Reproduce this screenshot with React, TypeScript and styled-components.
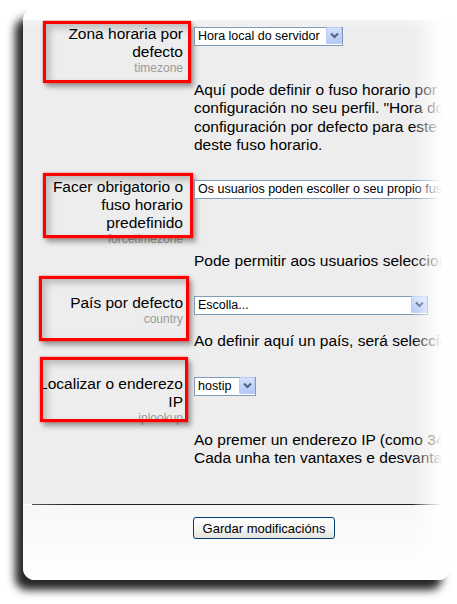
import React from 'react';
import styled, { createGlobalStyle } from 'styled-components';

const GlobalStyle = createGlobalStyle`
  html, body {
    margin: 0;
    padding: 0;
    background: #ffffff;
    font-family: "Liberation Sans", Arial, sans-serif;
  }
`;

const Page = styled.div`
  width: 457px;
  height: 604px;
  padding: 8px 7px 0 23px;
  box-sizing: border-box;
  overflow: hidden;
`;

const Card = styled.div`
  position: relative;
  width: 427px;
  height: 572px;
  background: #ffffff;
  border-radius: 12px;
  box-shadow: -8px 10px 9px rgba(0, 0, 0, 0.85);
  overflow: hidden;
  display: flex;
  flex-direction: column;
`;

const Panel = styled.div`
  margin-top: 12px;
  padding: 5px 0 37px 10px;
  background: linear-gradient(to bottom, #f4f4f4 0, #ededed 10px);
  overflow: hidden;
`;

const Row = styled.div`
  display: grid;
  grid-template-columns: 150px 600px;
  column-gap: 11px;
  margin-bottom: 24px;

  &:last-child {
    margin-bottom: 0;
  }
`;

const LabelCell = styled.div`
  position: relative;
  grid-column: 1;
  grid-row: 1;
  text-align: right;
  color: #000;
`;

const LabelText = styled.div`
  font-size: 15.5px;
  line-height: 18px;
`;

const Alias = styled.div`
  font-size: 12px;
  line-height: 14px;
  color: #9a9a9a;
`;

const Highlight = styled.div<{ $top: number; $left: number; $w: number; $h: number }>`
  position: absolute;
  top: ${p => p.$top}px;
  left: ${p => p.$left}px;
  width: ${p => p.$w}px;
  height: ${p => p.$h}px;
  box-sizing: border-box;
  border: 3px solid #ff0000;
  box-shadow: 0 0 2px rgba(255, 0, 0, 0.6), 3px 4px 5px rgba(0, 0, 0, 0.35),
    inset 4px 4px 7px rgba(0, 0, 0, 0.22);
  pointer-events: none;
`;

const Control = styled.div`
  grid-column: 2;
  grid-row: 1;
  padding-top: 1px;
`;

const SelectWrap = styled.div<{ $w: number }>`
  position: relative;
  width: ${p => p.$w}px;
  height: 19px;
`;

const Select = styled.select`
  appearance: none;
  -webkit-appearance: none;
  width: 100%;
  height: 19px;
  box-sizing: border-box;
  margin: 0;
  padding: 0 18px 0 3px;
  border: 1px solid #7f9db9;
  border-radius: 0;
  background: #ffffff;
  font-family: "Liberation Sans", Arial, sans-serif;
  font-size: 12.5px;
  line-height: 17px;
  color: #000;
`;

const Arrow = styled.span`
  position: absolute;
  top: 1px;
  right: 1px;
  width: 16px;
  height: 17px;
  box-sizing: border-box;
  border: 1px solid #bccdf5;
  border-radius: 1px;
  background: linear-gradient(to bottom, #d4e0fc, #b4c8f5);
  display: flex;
  align-items: center;
  justify-content: center;
  pointer-events: none;
`;

const Description = styled.div`
  grid-column: 2;
  grid-row: 2;
  margin-top: 6px;
  font-size: 15.5px;
  line-height: 18.3px;
  white-space: nowrap;
  color: #000;
`;

const Fade = styled.div`
  position: absolute;
  top: 0;
  right: 0;
  width: 38px;
  height: 100%;
  background: linear-gradient(to right, rgba(255, 255, 255, 0), #ffffff 80%);
  pointer-events: none;
`;

const Separator = styled.div`
  height: 1px;
  margin: 0 5px 0 9px;
  background: linear-gradient(to right, #555 0, #222 10%, #222 92%, #888 100%);
`;

const Footer = styled.div`
  flex: 1;
  padding: 12px 0 0 170px;
  background: linear-gradient(to bottom, #f7f7f7, #ffffff);
`;

const Button = styled.button`
  height: 22px;
  width: 142px;
  padding: 0;
  border: 1px solid #003c74;
  border-radius: 3px;
  background: linear-gradient(to bottom, #ffffff 0, #f3f3ef 60%, #e3e2da 100%);
  font-family: "Liberation Sans", Arial, sans-serif;
  font-size: 13px;
  color: #000;
`;

const Chevron = () => (
  <svg width="9" height="7" viewBox="0 0 9 7">
    <polyline points="1,1.5 4.5,5 8,1.5" fill="none" stroke="#4d6185" strokeWidth="2" />
  </svg>
);

type Setting = {
  label: string;
  alias: string;
  value: string;
  width: number;
  lines: string[];
  box: { top: number; left: number; w: number; h: number };
};

const settings: Setting[] = [
  {
    label: 'Zona horaria por defecto',
    alias: 'timezone',
    value: 'Hora local do servidor',
    width: 149,
    lines: [
      'Aquí pode definir o fuso horario por defecto dos usuarios. Eles poden cambiar esta',
      'configuración no seu perfil. "Hora do servidor" fará que Moodle use a',
      'configuración por defecto para este servidor. Os usuarios poden escoller a partir',
      'deste fuso horario.',
    ],
    box: { top: -4, left: 10, w: 148, h: 62 },
  },
  {
    label: 'Facer obrigatorio o fuso horario predefinido',
    alias: 'forcetimezone',
    value: 'Os usuarios poden escoller o seu propio fuso horario',
    width: 340,
    lines: ['Pode permitir aos usuarios seleccionar o seu propio fuso horario ou forzalos'],
    box: { top: -5, left: 10, w: 150, h: 65 },
  },
  {
    label: 'País por defecto',
    alias: 'country',
    value: 'Escolla...',
    width: 234,
    lines: ['Ao definir aquí un país, será seleccionado por defecto nas novas contas'],
    box: { top: -18, left: 6, w: 150, h: 65 },
  },
  {
    label: 'Localizar o enderezo IP',
    alias: 'iplookup',
    value: 'hostip',
    width: 62,
    lines: [
      'Ao premer un enderezo IP (como 34.12.222.93), o sistema intentará localizalo.',
      'Cada unha ten vantaxes e desvantaxes, consulte a documentación.',
    ],
    box: { top: -18, left: 7, w: 148, h: 65 },
  },
];

export default function App() {
  return (
    <>
      <GlobalStyle />
      <Page>
        <Card>
          <Panel>
            {settings.map(s => (
              <Row key={s.alias}>
                <LabelCell>
                  <LabelText>{s.label}</LabelText>
                  <Alias>{s.alias}</Alias>
                  <Highlight $top={s.box.top} $left={s.box.left} $w={s.box.w} $h={s.box.h} />
                </LabelCell>
                <Control>
                  <SelectWrap $w={s.width}>
                    <Select defaultValue={s.value}>
                      <option>{s.value}</option>
                    </Select>
                    <Arrow>
                      <Chevron />
                    </Arrow>
                  </SelectWrap>
                </Control>
                <Description>
                  {s.lines.map((l, i) => (
                    <div key={i}>{l}</div>
                  ))}
                </Description>
              </Row>
            ))}
          </Panel>
          <Separator />
          <Footer>
            <Button type="button">Gardar modificacións</Button>
          </Footer>
          <Fade />
        </Card>
      </Page>
    </>
  );
}
